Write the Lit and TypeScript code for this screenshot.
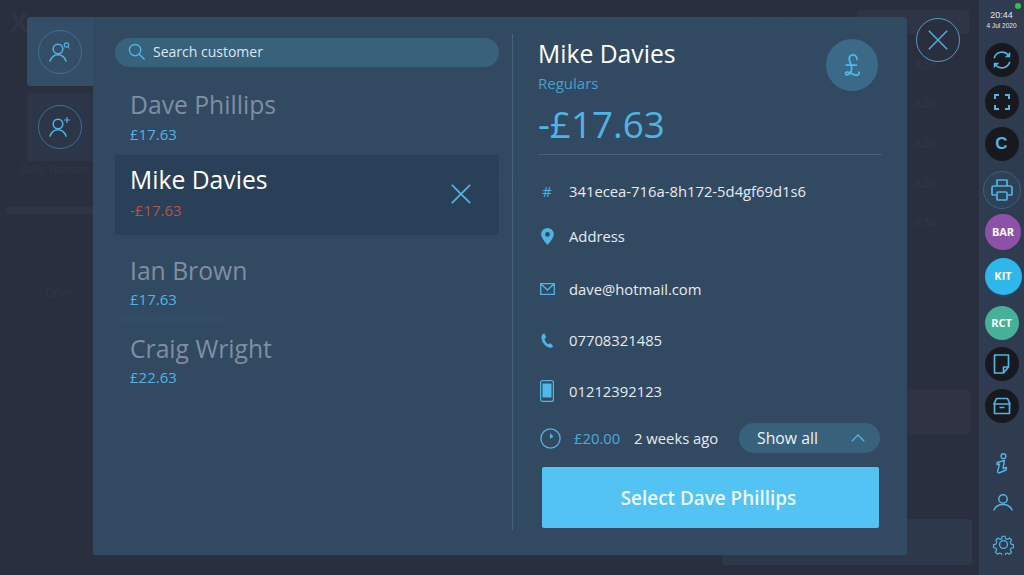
import { LitElement, html, css, svg } from "lit";
import { customElement } from "lit/decorators.js";

const customers = [
  { name: "Dave Phillips", bal: "£17.63", cls: "first" },
  { name: "Mike Davies", bal: "-£17.63", cls: "sel" },
  { name: "Ian Brown", bal: "£17.63", cls: "" },
  { name: "Craig Wright", bal: "£22.63", cls: "" },
];

const X = (s: number, w = 1.6) => html`<svg width=${s} height=${s} viewBox="0 0 24 24" fill="none" stroke="#4fb4e4" stroke-width=${w}><path d="M2 2 22 22M22 2 2 22"/></svg>`;

const personIcon = (extra: unknown) => html`<svg width="24" height="24" viewBox="0 0 24 24" fill="none" stroke="#4fb4e4" stroke-width="1.5" stroke-linecap="round"><circle cx="10" cy="9" r="4.8"/><path d="M2 21c1.5-4 4.5-6.2 8-6.2s6.5 2.200 8 6.200"/>${extra}</svg>`;

const sideIcons: Record<string, unknown> = {
  sync: html`<svg width="22" height="22" viewBox="0 0 24 24" fill="none" stroke="#4fb4e4" stroke-width="1.8"><path d="M3.500 10A9 9 0 0 1 19 6.500M20.500 14A9 9 0 0 1 5 17.500"/><path d="M21 3v6h-6zM3 21v-6h6z" fill="#4fb4e4" stroke="none"/></svg>`,
  full: html`<svg width="16" height="16" viewBox="0 0 16 16" fill="none" stroke="#4fb4e4" stroke-width="2"><path d="M1 5V1h4M11 1h4v4M15 11v4h-4M5 15H1v-4"/></svg>`,
  print: html`<svg width="22" height="24" viewBox="0 0 22 24" fill="none" stroke="#4fb4e4" stroke-width="1.700" stroke-linejoin="round"><path d="M6 8V2h10v6M5 17H2a1 1 0 0 1-1-1V10a2 2 0 0 1 2-2h16a2 2 0 0 1 2 2v6a1 1 0 0 1-1 1h-3"/><rect x="6" y="14" width="10" height="8" rx="1"/></svg>`,
  note: html`<svg width="18" height="20" viewBox="0 0 18 20" fill="none" stroke="#4fb4e4" stroke-width="1.700" stroke-linejoin="round"><path d="M1.500 1h14v12l-5 6h-9zM15.500 13h-5v6"/></svg>`,
  box: html`<svg width="18" height="18" viewBox="0 0 18 18" fill="none" stroke="#4fb4e4" stroke-width="1.700" stroke-linejoin="round"><path d="M3.500 1.500h11L17 7H1zM1.500 7v9.500h15V7M6.500 10.500h5"/></svg>`,
};

const sideItems = [
  { cy: 60, d: 34, x: 1, kind: "dark", icon: "sync" },
  { cy: 102, d: 34, x: 0, kind: "dark", icon: "full" },
  { cy: 144, d: 34, x: 0, kind: "dark", text: "C" },
  { cy: 190, d: 38, x: 0, kind: "ring", icon: "print" },
  { cy: 232, d: 36, x: 3, kind: "bar", text: "BAR" },
  { cy: 276, d: 37, x: 3, kind: "kit", text: "KIT" },
  { cy: 323, d: 34, x: 0, kind: "rct", text: "RCT" },
  { cy: 364, d: 34, x: 0, kind: "dark", icon: "note" },
  { cy: 406, d: 34, x: 0, kind: "dark", icon: "box" },
];

const ghosts = [
  { x: 725, y: 57, t: "Battered Mushrooms" }, { x: 725, y: 96, t: "Battered Mushrooms" },
  { x: 725, y: 136, t: "Battered Mushrooms" }, { x: 725, y: 163, t: "Battered Mushrooms" },
  { x: 725, y: 215, t: "Battered Mushrooms" }, { x: 915, y: 57, t: "8.50" }, { x: 915, y: 96, t: "8.50" },
  { x: 915, y: 136, t: "8.50" }, { x: 915, y: 176, t: "8.50" }, { x: 915, y: 215, t: "8.50" },
  { x: 20, y: 162, t: "Daily Specials" }, { x: 45, y: 286, t: "Offer" }, { x: 272, y: 177, t: "Drinks" },
  { x: 372, y: 177, t: "Desserts" }, { x: 476, y: 177, t: "Soft Drinks" }, { x: 755, y: 12, t: "Select Customer" },
  { x: 808, y: 535, t: "Select Items" },
];
const blocks = [
  { x: 6, y: 207, w: 105, h: 7, c: "#2d3547" }, { x: 118, y: 207, w: 110, h: 7, c: "#2d3547" },
  { x: 235, y: 207, w: 100, h: 7, c: "#2d3547" }, { x: 344, y: 207, w: 100, h: 7, c: "#5a4a50" },
  { x: 118, y: 316, w: 105, h: 7, c: "#5c8fb2" }, { x: 722, y: 519, w: 250, h: 46, c: "#2e384b" },
  { x: 892, y: 389, w: 78, h: 46, c: "#2f3344" }, { x: 857, y: 10, w: 112, h: 24, c: "#2d3547" },
];

@customElement("app-root")
export class AppRoot extends LitElement {
  static styles = css`
    :host { display: block; width: 1024px; height: 575px; overflow: hidden; font-family: "Open Sans", sans-serif; }
    * { box-sizing: border-box; }
    .app { position: relative; display: flex; width: 1024px; height: 575px; background: #2a2f40; overflow: hidden; }
    .backdrop { position: absolute; inset: 0; }
    .ghost { position: absolute; font-size: 11px; line-height: 14px; color: #303848; white-space: nowrap; }
    .gblock { position: absolute; border-radius: 3px; }
    .logo { position: absolute; left: 10px; top: 8px; font: 700 27px "Liberation Sans", sans-serif; color: #313446; }
    .main { position: relative; flex: 1; display: flex; align-items: flex-start; padding: 17px 0 0 27px; }
    .tabs { width: 66px; display: flex; flex-direction: column; gap: 7px; }
    .tab { height: 69px; display: flex; align-items: center; justify-content: center; }
    .tab.on { background: #344e67; border-radius: 4px 0 0 4px; }
    .tab.off { background: #2d3648; height: 68px; }
    .ring { width: 44px; height: 44px; border-radius: 50%; border: 1px solid #3e6f8e; display: flex; align-items: center; justify-content: center; }
    .modal { position: relative; width: 814px; height: 538px; background: rgba(51, 75, 99, 0.965); border-radius: 0 4px 0 0; display: flex; padding: 17px 0 0 22px; }
    .left { width: 384px; flex: none; padding-top: 4px; }
    .search { height: 29px; border-radius: 15px; background: #38617c; display: flex; align-items: center; gap: 8px; padding: 0 0 2px 13px; color: #dfe7ed; font-size: 14px; margin-bottom: 2px; }
    .item { display: flex; align-items: flex-start; justify-content: space-between; height: 78px; padding: 21px 27px 0 15px; }
    .item.first { height: 86px; }
    .item.sel { height: 80px; padding-top: 10px; background: rgba(38, 60, 84, 0.7); }
    .name { font-size: 24.7px; line-height: 30px; color: #7f8fa1; }
    .bal { font-size: 15px; line-height: 20px; margin-top: 3px; color: #4fb4e4; }
    .first .bal { margin-top: 4px; }
    .sel .name { color: #fff; }
    .sel .bal { color: #b5534f; margin-top: 5px; }
    .item-x { margin-top: 18px; display: flex; }
    .split { width: 1px; height: 496px; background: #46647d; margin-left: 13px; flex: none; }
    .right { width: 344px; margin-left: 25px; flex: none; padding-top: 4px; position: relative; }
    .title { font-size: 24.7px; line-height: 32px; color: #fff; }
    .group { font-size: 15px; line-height: 20px; color: #4c9ecd; margin-top: 3px; }
    .amount { font-size: 36.8px; line-height: 48px; color: #4fb4e4; margin-top: 7px; }
    .coin { position: absolute; right: 4px; top: 5px; width: 52px; height: 52px; border-radius: 50%; background: #3a6a88; display: flex; align-items: center; justify-content: center; }
    .rule { height: 1px; background: #466079; margin-top: 6px; }
    .row { display: flex; align-items: center; height: 24px; gap: 13px; font-size: 14.8px; color: #e6ebef; }
    .row .ic { width: 18px; display: flex; justify-content: center; color: #4fb4e4; flex: none; }
    .r1 { margin-top: 24px; } .r2 { margin-top: 21px; } .r3 { margin-top: 29px; } .r4 { margin-top: 27px; } .r5 { margin-top: 27px; }
    .hist { display: flex; align-items: center; height: 30px; margin-top: 20px; font-size: 14.8px; color: #e6ebef; }
    .clock { margin-left: 2px; display: flex; }
    .paid { color: #4fa8d8; margin-left: 13px; width: 60px; }
    .pill { margin-left: auto; margin-right: 2px; width: 141px; height: 30px; border-radius: 15px; background: #38617c; display: flex; align-items: center; justify-content: space-between; padding: 0 15px 0 18px; font-size: 15.8px; color: #eef2f5; }
    .cta { display: flex; align-items: center; justify-content: center; width: 337px; height: 61px; margin: 14px 0 0 4px; padding: 0 4px 0 0; border: 0; border-radius: 2px; background: #53c3f4; color: #eefaff; font: 600 18.9px "Open Sans", sans-serif; }
    .close { margin: 1px 0 0 9px; width: 44px; height: 44px; border-radius: 50%; border: 1px solid #4d9cc6; display: flex; align-items: center; justify-content: center; background: #2a2f40; }
    .side { position: relative; width: 45px; flex: none; background: #2f3b4e; display: flex; flex-direction: column; align-items: center; padding-top: 10px; }
    .dot { position: absolute; right: 3px; top: 3px; width: 6px; height: 6px; border-radius: 50%; background: #2fc24f; }
    .time { font: 9px/10px "Liberation Sans", sans-serif; color: #e3e8ee; height: 10px; }
    .date { font: 6.500px/9px "Liberation Sans", sans-serif; color: #e3e8ee; height: 9px; white-space: nowrap; margin-top: 1px; }
    .btn { flex: none; border-radius: 50%; display: flex; align-items: center; justify-content: center; font-weight: 700; color: #fff; padding-bottom: 1px; }
    .btn.dark { background: #17191f; color: #4fb4e4; }
    .btn.dark.txt { font: 700 17px "Liberation Sans", sans-serif; }
    .btn.ring2 { background: #2f4157; border: 1px solid #3d607c; }
    .btn.bar { background: #8d52a8; font-size: 11px; }
    .btn.kit { background: #2fb6ea; font-size: 11px; box-shadow: 0 2px 1px #27496a; }
    .btn.rct { background: #47b098; font-size: 11px; }
    .tools { display: flex; flex-direction: column; align-items: center; margin-top: 30px; }
    .tools svg { display: block; }
    .t-user { margin: 20px 0 0 3px; }
    .t-gear { margin: 23px 0 0 3px; }
  `;

  private side() {
    let bottom = 30;
    return sideItems.map((b) => {
      const top = b.cy - b.d / 2;
      const mt = top - bottom;
      bottom = top + b.d;
      const k = b.kind === "ring" ? "ring2" : b.kind;
      return html`<div class="btn ${k} ${b.text ? "txt" : ""}" style="width:${b.d}px;height:${b.d}px;margin-top:${mt}px;margin-left:${b.x}px">${b.text ?? sideIcons[b.icon as string]}</div>`;
    });
  }

  render() {
    return html`<div class="app">
      <div class="backdrop">
        <div class="logo">X</div>
        ${blocks.map((b) => html`<div class="gblock" style="left:${b.x}px;top:${b.y}px;width:${b.w}px;height:${b.h}px;background:${b.c}"></div>`)}
        ${ghosts.map((g) => html`<div class="ghost" style="left:${g.x}px;top:${g.y}px">${g.t}</div>`)}
      </div>
      <div class="main">
        <div class="tabs">
          <div class="tab on"><div class="ring">${personIcon(svg`<circle cx="18.500" cy="5" r="2.200" stroke-width="1.200"/><path d="M20 6.800 21.500 8.300" stroke-width="1"/>`)}</div></div>
          <div class="tab off"><div class="ring">${personIcon(svg`<path d="M19 2.500v5M16.500 5h5" stroke-width="1.200"/>`)}</div></div>
        </div>
        <div class="modal">
          <div class="left">
            <div class="search">
              <svg width="17" height="17" viewBox="0 0 18 18" fill="none" stroke="#4fb4e4" stroke-width="1.500" stroke-linecap="round"><circle cx="7.500" cy="7.500" r="6"/><path d="M12 12l5 5"/></svg>
              <span>Search customer</span>
            </div>
            ${customers.map((c) => html`<div class="item ${c.cls}">
              <div><div class="name">${c.name}</div><div class="bal">${c.bal}</div></div>
              ${c.cls === "sel" ? html`<div class="item-x">${X(22, 1.900)}</div>` : ""}
            </div>`)}
          </div>
          <div class="split"></div>
          <div class="right">
            <div class="title">Mike Davies</div>
            <div class="group">Regulars</div>
            <div class="amount">-£17.63</div>
            <div class="coin">
              <svg width="18" height="25" viewBox="0 0 20 28" fill="none" stroke="#4fb9ea" stroke-width="2" stroke-linecap="round"><path d="M15.500 7C15.500 3.500 13 2 11 2 8 2 6.500 4.500 7 7.500 7.600 11 10.500 15 9.500 19 9 22 6.500 24.500 4.500 24.500 2.500 24.500 2 22 4 21.500 8 20.500 11 25 14.500 25 16.500 25 18 23.500 18 21.500M3.500 13.500H15"/></svg>
            </div>
            <div class="rule"></div>
            <div class="row r1"><span class="ic">#</span><span>341ecea-716a-8h172-5d4gf69d1s6</span></div>
            <div class="row r2"><span class="ic"><svg width="13" height="17" viewBox="0 0 13 17"><path fill-rule="evenodd" fill="#4fb4e4" d="M6.500 0A6.300 6.300 0 0 0 .2 6.300C.2 10.500 6.500 17 6.500 17s6.300-6.500 6.300-10.700A6.300 6.300 0 0 0 6.500 0zm0 4a2.400 2.400 0 1 1 0 4.800 2.400 2.400 0 0 1 0-4.800z"/></svg></span><span>Address</span></div>
            <div class="row r3"><span class="ic"><svg width="15" height="12" viewBox="0 0 15 12" fill="none" stroke="#4fb4e4" stroke-width="1.300"><path d="M.7.7h13.600v10.600H.7zM1 1l6.500 6L14 1"/></svg></span><span>dave@hotmail.com</span></div>
            <div class="row r4"><span class="ic"><svg width="13" height="15" viewBox="0 0 13 15"><path fill="#4fb4e4" d="M3.300.2 5 3.800c.2.500 0 1-.4 1.300l-1.200.9c.6 2 2 4 3.800 5.200l1.400-.8c.4-.2.900-.2 1.200.1l2.400 2.700c-.7 1.200-2 1.800-3.200 1.600C4.500 14 .9 9.700.5 5 .300 2.900 1.400.9 3.300.2z"/></svg></span><span>07708321485</span></div>
            <div class="row r5"><span class="ic"><svg width="14" height="22" viewBox="0 0 14 22"><rect x=".6" y=".6" width="12.800" height="20.800" rx="2" fill="none" stroke="#4fb4e4" stroke-width="1.200"/><rect x="2.500" y="3.500" width="9" height="14" fill="#4fb9ea"/></svg></span><span>01212392123</span></div>
            <div class="hist">
              <span class="clock"><svg width="21" height="21" viewBox="0 0 21 21" fill="none" stroke="#4fb4e4" stroke-width="1.300"><circle cx="10.500" cy="10.500" r="9.600"/><path d="M10 5v6l3.500-2.500z" fill="#4fb4e4" stroke="none"/></svg></span>
              <span class="paid">£20.00</span>
              <span>2 weeks ago</span>
              <div class="pill"><span>Show all</span><svg width="14" height="8" viewBox="0 0 14 8" fill="none" stroke="#4fb4e4" stroke-width="1.300"><path d="M.8 7.200 7 1l6.200 6.200"/></svg></div>
            </div>
            <button class="cta">Select Dave Phillips</button>
          </div>
        </div>
        <div class="close">${X(22, 1.500)}</div>
      </div>
      <div class="side">
        <div class="dot"></div>
        <div class="time">20:44</div>
        <div class="date">4 Jul 2020</div>
        ${this.side()}
        <div class="tools">
          <svg width="14" height="21" viewBox="0 0 14 21" fill="none" stroke="#4fb4e4" stroke-width="1.400" stroke-linejoin="round"><circle cx="8.500" cy="3.200" r="2.400"/><path d="M2 9.500 9.500 7.500 8 15.500 11.500 14.500 11 17 4 20 2.500 19 4.500 11 2 11.500z"/></svg>
          <svg class="t-user" width="20" height="17" viewBox="0 0 20 17" fill="none" stroke="#4fb4e4" stroke-width="1.500" stroke-linecap="round"><circle cx="10" cy="5" r="4.200"/><path d="M1 16c1.500-3.500 4.800-5.500 9-5.500s7.500 2 9 5.500"/></svg>
          <svg class="t-gear" width="21" height="21" viewBox="0 0 24 24" fill="none" stroke="#4fb4e4" stroke-width="1.500" stroke-linejoin="round"><circle cx="12" cy="12" r="4.500"/><path d="M10 1.500h4l.6 3 2.300 1 2.600-1.700 2.800 2.800-1.700 2.600 1 2.300 3 .6v4l-3 .6-1 2.300 1.700 2.600-2.800 2.800-2.600-1.700-2.300 1-.6 3h-4l-.6-3-2.300-1-2.600 1.700-2.800-2.800 1.700-2.600-1-2.300-3-.6v-4l3-.6 1-2.300L2.300 6.600l2.800-2.800 2.600 1.700 2.300-1z" transform="translate(1.200 1.200) scale(.9)"/></svg>
        </div>
      </div>
    </div>`;
  }
}
